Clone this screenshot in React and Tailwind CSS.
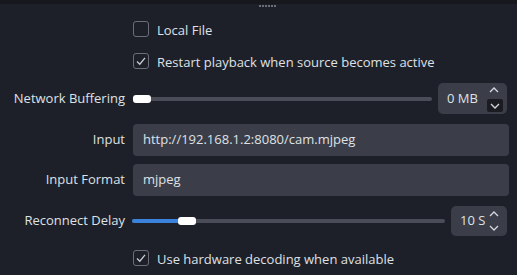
import React from "react";

const font = { fontFamily: '"Open Sans", "Noto Sans", sans-serif' };

function Check({ checked }) {
  return (
    <div className="w-[16px] h-[16px] rounded-[3px] border border-[#6b6e78] flex items-center justify-center shrink-0">
      {checked && (
        <svg width="12" height="12" viewBox="0 0 12 12">
          <path d="M2 6.5 L4.8 9.2 L10 2.8" fill="none" stroke="#c9ccd3" strokeWidth="1.3" />
        </svg>
      )}
    </div>
  );
}

function Chevron({ up }) {
  return (
    <svg width="10" height="6" viewBox="0 0 10 6">
      <path d={up ? "M1 5 L5 1 L9 5" : "M1 1 L5 5 L9 1"} fill="none" stroke="#d5d8de" strokeWidth="1.3" />
    </svg>
  );
}

function CheckRow({ checked, label, className }) {
  return (
    <div className={"flex items-center pl-[133px] " + className}>
      <Check checked={checked} />
      <span className="ml-[8px] mt-[3px] text-[13px] text-[#dfe1e6]">{label}</span>
    </div>
  );
}

function Label({ children }) {
  return <div className="w-[125px] text-right text-[13px] text-[#dfe1e6] shrink-0">{children}</div>;
}

export default function App() {
  return (
    <div className="w-[517px] h-[275px] bg-[#1e2029] relative overflow-hidden" style={font}>
      <div className="h-[4px] bg-[#16181e]" />
      <div className="flex justify-center mt-[1px] ml-[18px] gap-[1px] h-[2px]">
        {[0, 1, 2, 3, 4, 5].map((i) => (
          <div key={i} className="w-[2px] h-[2px] bg-[#6b6e78]" />
        ))}
      </div>
      <CheckRow checked={false} label="Local File" className="mt-[14px] h-[16px]" />
      <CheckRow checked={true} label="Restart playback when source becomes active" className="mt-[16px] h-[16px]" />
      <div className="flex items-center mt-[14px] h-[31px]">
        <Label>Network Buffering</Label>
        <div className="ml-[8px] w-[299px] h-[4px] rounded-full bg-[#4a4d57] relative">
          <div className="absolute left-0 top-[-2px] w-[18px] h-[8px] rounded-[3px] bg-white" />
        </div>
        <div className="ml-[6px] w-[69px] h-[31px] rounded-[5px] bg-[#3b3e48] flex items-center relative">
          <span className="ml-[9px] text-[13px] text-[#dfe1e6]">0 MB</span>
          <div className="absolute right-[8px] top-[4px]"><Chevron up /></div>
          <div className="absolute right-[4px] top-[16px] w-[16px] h-[13px] rounded-[2px] bg-[#1a1c22] flex items-center justify-center">
            <Chevron />
          </div>
        </div>
      </div>
      <div className="flex items-center mt-[10px] h-[32px]">
        <Label>Input</Label>
        <div className="ml-[8px] w-[376px] h-[32px] rounded-[4px] bg-[#3b3e48] flex items-center px-[10px] text-[13px] text-[#dfe1e6]">
          http://192.168.1.2:8080/cam.mjpeg
        </div>
      </div>
      <div className="flex items-center mt-[8px] h-[32px]">
        <Label>Input Format</Label>
        <div className="ml-[8px] w-[376px] h-[32px] rounded-[4px] bg-[#3b3e48] flex items-center px-[10px] text-[13px] text-[#dfe1e6]">
          mjpeg
        </div>
      </div>
      <div className="flex items-center mt-[10px] h-[30px]">
        <Label>Reconnect Delay</Label>
        <div className="ml-[7px] w-[313px] h-[4px] rounded-full bg-[#4a4d57] relative">
          <div className="absolute left-0 top-0 w-[50px] h-[4px] rounded-full bg-[#3a82dc]" />
          <div className="absolute left-[46px] top-[-2px] w-[18px] h-[8px] rounded-[3px] bg-white" />
        </div>
        <div className="ml-[6px] w-[56px] h-[30px] rounded-[5px] bg-[#3b3e48] flex items-center relative">
          <span className="ml-[9px] text-[13px] text-[#dfe1e6]">10 S</span>
          <div className="absolute right-[8px] top-[5px]"><Chevron up /></div>
          <div className="absolute right-[8px] top-[19px]"><Chevron /></div>
        </div>
      </div>
      <CheckRow checked={true} label="Use hardware decoding when available" className="mt-[14px] h-[16px]" />
    </div>
  );
}
